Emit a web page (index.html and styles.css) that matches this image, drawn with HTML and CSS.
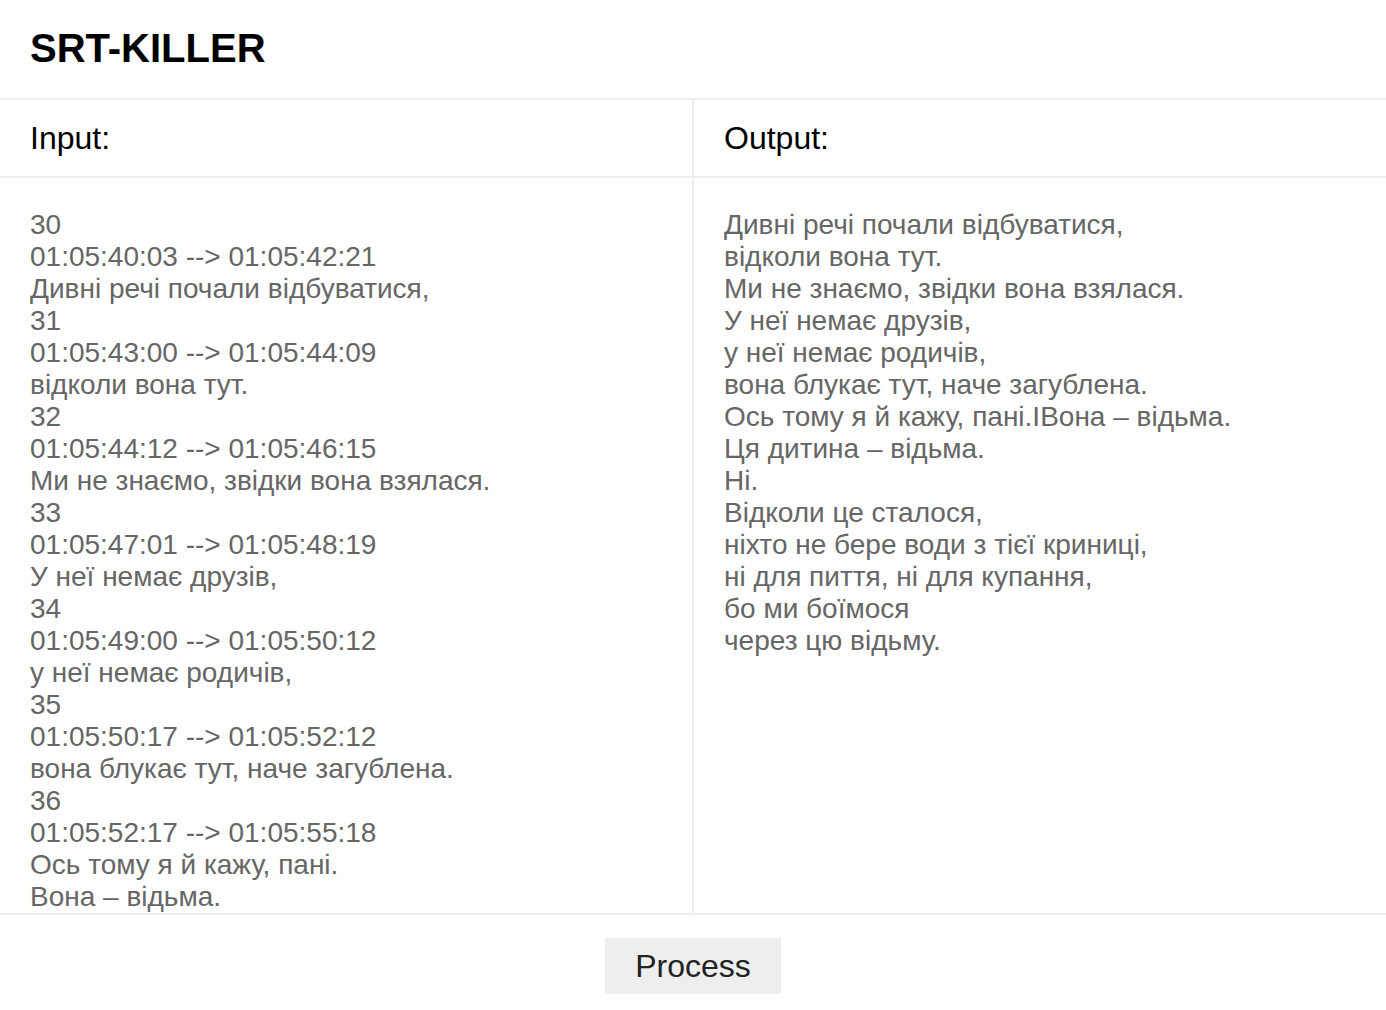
FILE: index.html
```html
<!DOCTYPE html>
<html lang="uk">
<head>
<meta charset="utf-8">
<title>SRT-KILLER</title>
<link rel="stylesheet" href="styles.css">
</head>
<body>
<div class="app">
  <header class="header"><h1 class="title">SRT-KILLER</h1></header>
  <main class="panes">
    <section class="pane pane-left">
      <div class="pane-label">Input:</div>
      <div class="pane-text">30
01:05:40:03 --&gt; 01:05:42:21
Дивні речі почали відбуватися,
31
01:05:43:00 --&gt; 01:05:44:09
відколи вона тут.
32
01:05:44:12 --&gt; 01:05:46:15
Ми не знаємо, звідки вона взялася.
33
01:05:47:01 --&gt; 01:05:48:19
У неї немає друзів,
34
01:05:49:00 --&gt; 01:05:50:12
у неї немає родичів,
35
01:05:50:17 --&gt; 01:05:52:12
вона блукає тут, наче загублена.
36
01:05:52:17 --&gt; 01:05:55:18
Ось тому я й кажу, пані.
Вона – відьма.</div>
    </section>
    <section class="pane">
      <div class="pane-label">Output:</div>
      <div class="pane-text">Дивні речі почали відбуватися,
відколи вона тут.
Ми не знаємо, звідки вона взялася.
У неї немає друзів,
у неї немає родичів,
вона блукає тут, наче загублена.
Ось тому я й кажу, пані.IВона – відьма.
Ця дитина – відьма.
Ні.
Відколи це сталося,
ніхто не бере води з тієї криниці,
ні для пиття, ні для купання,
бо ми боїмося
через цю відьму.</div>
    </section>
  </main>
  <footer class="footer"><button class="btn" type="button">Process</button></footer>
</div>
</body>
</html>
```

FILE: styles.css
```css
* { box-sizing: border-box; }
html, body { margin: 0; padding: 0; }
body {
  font-family: "Liberation Sans", Arial, Helvetica, sans-serif;
  background: #fff;
  color: #000;
}
.app {
  height: 1010px;
  display: flex;
  flex-direction: column;
  overflow: hidden;
}
.header {
  height: 100px;
  flex: none;
  display: flex;
  align-items: center;
  padding: 0 30px 2px;
  border-bottom: 2px solid #eee;
}
.title {
  margin: 0;
  font-size: 40px;
  font-weight: bold;
  line-height: 46px;
}
.panes {
  flex: 1;
  display: flex;
  min-height: 0;
  border-bottom: 2px solid #eee;
}
.pane {
  flex: 1 1 0;
  display: flex;
  flex-direction: column;
  min-width: 0;
}
.pane-left { border-right: 2px solid #eee; }
.pane-label {
  height: 78px;
  flex: none;
  display: flex;
  align-items: center;
  padding: 0 30px;
  font-size: 32px;
  border-bottom: 2px solid #eee;
}
.pane-text {
  flex: 1;
  min-height: 0;
  overflow: hidden;
  padding: 31px 30px 0;
  font-size: 28px;
  line-height: 32px;
  color: #666;
  white-space: pre-line;
}
.footer {
  height: 95px;
  flex: none;
  display: flex;
  justify-content: center;
  align-items: flex-start;
  padding-top: 23px;
}
.btn {
  font-family: "Liberation Sans", Arial, Helvetica, sans-serif;
  font-size: 32px;
  color: #222;
  background: #eee;
  border: none;
  height: 56px;
  padding: 0 30px;
  border-radius: 0;
}
```
